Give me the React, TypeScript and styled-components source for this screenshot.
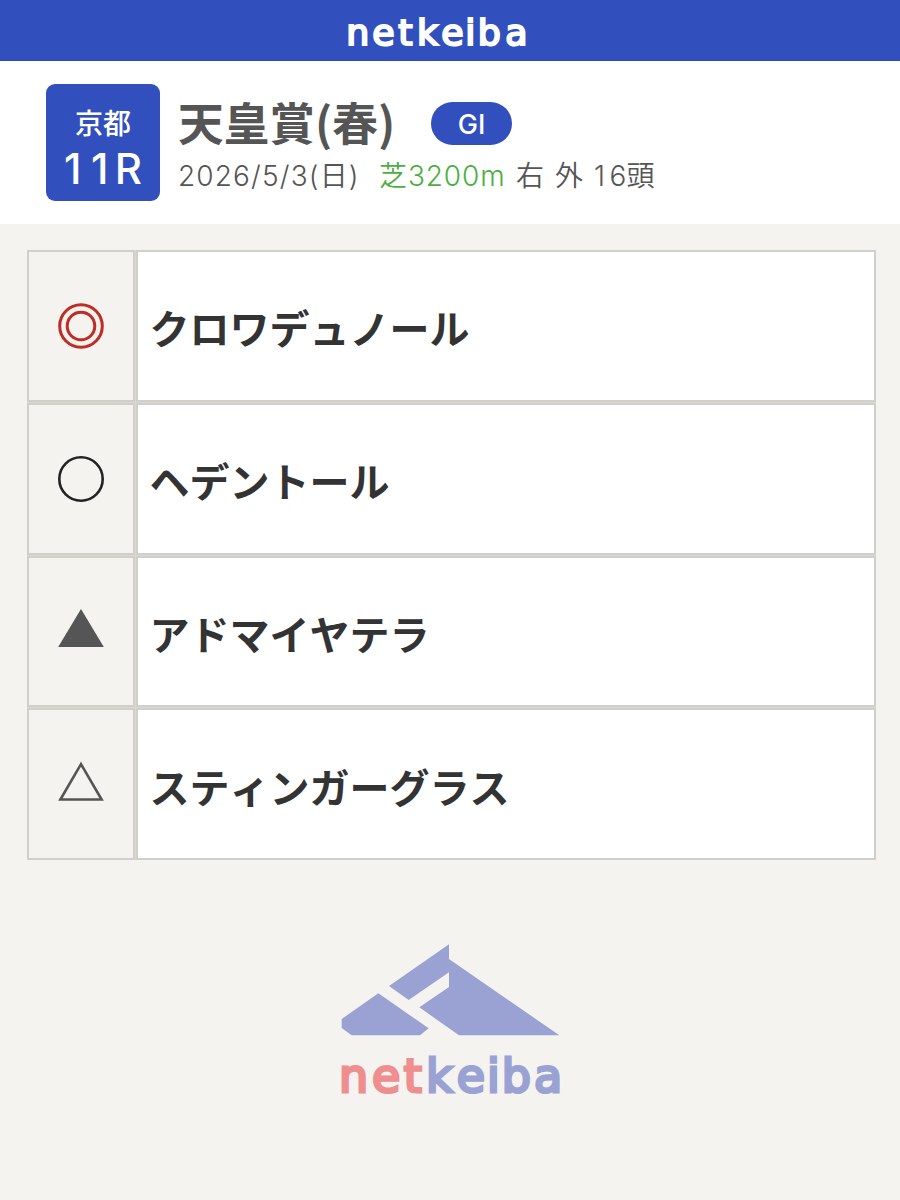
import React from "react";
import styled, { createGlobalStyle } from "styled-components";

const BLUE = "#3150bd";
const PAPER = "#f4f3ef";
const LINE = "#d1cfc9";

const GlobalStyle = createGlobalStyle`
  *, *::before, *::after { box-sizing: border-box; }
  body {
    margin: 0;
    background: ${PAPER};
    font-family: "Noto Sans CJK JP", sans-serif;
  }
`;

const Page = styled.div`
  width: 900px;
  height: 1200px;
  overflow: hidden;
  display: flex;
  flex-direction: column;
  background: ${PAPER};
`;

const TopBar = styled.header`
  height: 61px;
  flex: none;
  padding-left: 330px;
  background: ${BLUE};
`;

const RaceHeader = styled.section`
  height: 163px;
  flex: none;
  display: flex;
  gap: 18px;
  padding: 23px 46px 0;
  background: #fff;
`;

const RaceBadge = styled.div`
  width: 114px;
  height: 117px;
  flex: none;
  display: flex;
  flex-direction: column;
  align-items: center;
  padding-top: 20px;
  border-radius: 9px;
  background: ${BLUE};
  color: #fff;
`;

const Venue = styled.div`
  font-size: 28px;
  line-height: 36px;
  font-weight: 500;
`;

const RaceNumber = styled.div`
  margin-top: 6px;
  font-family: Inter, sans-serif;
  font-size: 42px;
  line-height: 46px;
  font-weight: 500;
`;

const Digit = styled.span<{ $gap: number }>`
  margin-right: ${(p) => p.$gap}px;
`;

const RaceInfo = styled.div`
  padding-top: 9px;
`;

const TitleRow = styled.div`
  display: flex;
  align-items: center;
  height: 60px;
`;

const Title = styled.h1`
  margin: 0;
  width: 253px;
  font-size: 45.7px;
  line-height: 58px;
  padding-bottom: 4px;
  font-weight: 700;
  color: #555;
  white-space: nowrap;
`;

const Grade = styled.span`
  width: 81px;
  height: 43px;
  border-radius: 22px;
  background: ${BLUE};
  color: #fff;
  font-family: Inter, sans-serif;
  font-size: 27px;
  line-height: 46px;
  font-weight: 500;
  text-align: center;
`;

const Details = styled.div`
  display: flex;
  height: 46px;
  font-family: Inter, "Noto Sans CJK JP", sans-serif;
  font-size: 28px;
  line-height: 46px;
  font-weight: 350;
  color: #555;
  white-space: pre;
`;

const Detail = styled.span<{ $width: number; $turf?: boolean; $spacing?: number }>`
  width: ${(p) => p.$width}px;
  flex: none;
  letter-spacing: ${(p) => p.$spacing ?? 0}px;
  color: ${(p) => (p.$turf ? "#4caf42" : "inherit")};
`;

const Picks = styled.main`
  flex: none;
  display: grid;
  grid-template-rows: repeat(4, 1fr);
  gap: 1px;
  width: 849px;
  height: 610px;
  margin: 26px 0 0 27px;
  background: #dad8d2;
`;

const PickRow = styled.div`
  display: grid;
  grid-template-columns: 108px 1fr;
  gap: 1px;
`;

const MarkCell = styled.div`
  display: flex;
  align-items: center;
  justify-content: center;
  border: 2px solid ${LINE};
  background: ${PAPER};
`;

const HorseCell = styled.div`
  display: flex;
  align-items: center;
  padding: 3px 0 0 11.5px;
  border: 2px solid ${LINE};
  background: #fff;
  color: #333;
  font-size: 40px;
  font-weight: 700;
  font-kerning: none;
  white-space: nowrap;
`;

const BrandFooter = styled.footer`
  margin: 70px 0 0 320px;
`;

const Drawing = styled.svg`
  display: block;
`;

const Letters = styled.text`
  font-family: "DejaVu Sans", sans-serif;
  font-weight: 400;
  stroke-linejoin: miter;
`;

type Mark = "double" | "circle" | "solid" | "outline";

function MarkIcon({ kind }: { kind: Mark }) {
  return (
    <Drawing width="48" height="50" viewBox="0 0 48 50" fill="none">
      {kind === "double" && (
        <g stroke="#bf2c25" strokeWidth="3">
          <circle cx="24" cy="25" r="21.3" />
          <circle cx="24" cy="25" r="13.8" />
        </g>
      )}
      {kind === "circle" && <circle cx="24" cy="25" r="21.7" stroke="#222" strokeWidth="2.6" />}
      {kind === "solid" && <path d="M24 3L46.8 41H1.2Z" fill="#555" />}
      {kind === "outline" && <path d="M24 5.2L44.6 40.5H3.4Z" stroke="#555" strokeWidth="2.6" />}
    </Drawing>
  );
}

const picks: { mark: Mark; horse: string }[] = [
  { mark: "double", horse: "クロワデュノール" },
  { mark: "circle", horse: "ヘデントール" },
  { mark: "solid", horse: "アドマイヤテラ" },
  { mark: "outline", horse: "スティンガーグラス" },
];

export default function App() {
  return (
    <>
      <GlobalStyle />
      <Page>
        <TopBar>
          <Drawing width="220" height="61" viewBox="0 0 660 183">
            <Letters
              fill="#fff"
              stroke="#fff"
              strokeWidth="6.5"
              fontSize="109"
              x="49 127 205 261 334 406 443 526"
              y="134"
            >
              netkeiba
            </Letters>
          </Drawing>
        </TopBar>
        <RaceHeader>
          <RaceBadge>
            <Venue>京都</Venue>
            <RaceNumber>
              <Digit $gap={9.5}>1</Digit>
              <Digit $gap={6.5}>1</Digit>R
            </RaceNumber>
          </RaceBadge>
          <RaceInfo>
            <TitleRow>
              <Title>天皇賞(春)</Title>
              <Grade>GI</Grade>
            </TitleRow>
            <Details>
              <Detail $width={201} $spacing={1.15}>2026/5/3(日)</Detail>
              <Detail $width={137} $spacing={0.9} $turf>芝3200m</Detail>
              <Detail $width={39}>右</Detail>
              <Detail $width={39}>外</Detail>
              <Detail $width={70}>
                <Digit $gap={4.5}>1</Digit>6頭
              </Detail>
            </Details>
          </RaceInfo>
        </RaceHeader>
        <Picks>
          {picks.map((pick) => (
            <PickRow key={pick.horse}>
              <MarkCell>
                <MarkIcon kind={pick.mark} />
              </MarkCell>
              <HorseCell>{pick.horse}</HorseCell>
            </PickRow>
          ))}
        </Picks>
        <BrandFooter>
          <Drawing width="260" height="180" viewBox="0 0 780 540">
            <g fill="#99a2d3">
              <path d="M175 190L326 295L300 316H95L65 294V267Z" />
              <path d="M387 43V87L718 316H417L298 232L387 171V127L266 210L207 168Z" />
            </g>
            <Letters fill="#ef8e8e" stroke="#ef8e8e" strokeWidth="9" fontSize="138" x="57 156 251" y="485">
              net
            </Letters>
            <Letters
              fill="#99a2d3"
              stroke="#99a2d3"
              strokeWidth="9"
              fontSize="138"
              x="318 410 501 545 642"
              y="485"
            >
              keiba
            </Letters>
          </Drawing>
        </BrandFooter>
      </Page>
    </>
  );
}
